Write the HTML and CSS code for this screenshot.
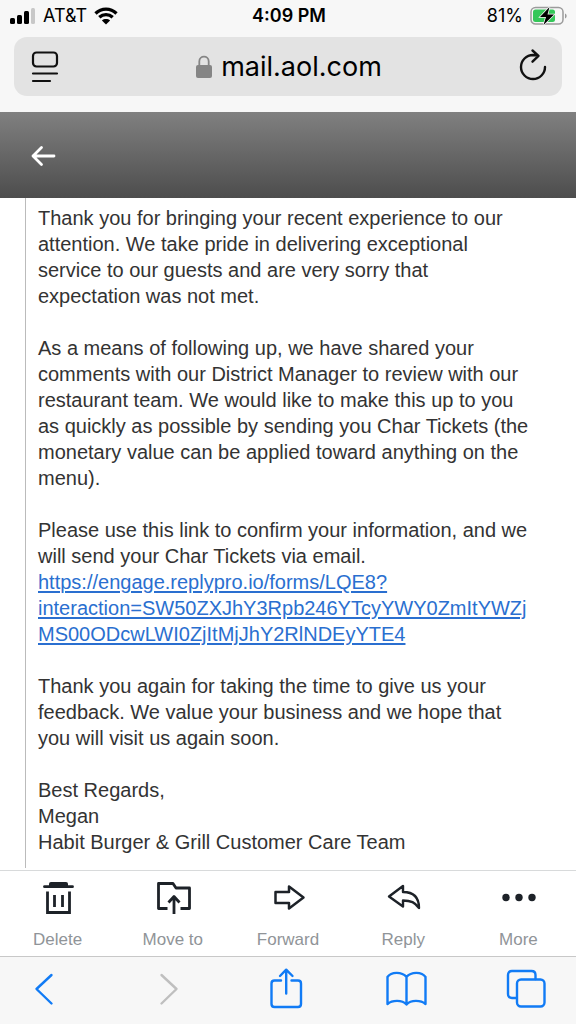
FILE: index.html
```html
<!DOCTYPE html>
<html lang="en">
<head>
<meta charset="utf-8">
<meta name="viewport" content="width=device-width, initial-scale=1">
<title>AOL Mail</title>
<link rel="stylesheet" href="styles.css">
</head>
<body>
<header class="browser-top">
  <div class="status">
    <div class="status-left">
      <svg class="signal" width="26" height="18" viewBox="0 0 26 18" aria-hidden="true">
        <rect x="0" y="11" width="5" height="6" rx="1.5"/><rect x="7" y="8" width="5" height="9" rx="1.5"/><rect x="14" y="4" width="5" height="13" rx="1.5"/><rect x="21" y="1" width="4" height="16" rx="1.5" fill="#c8c8c8"/>
      </svg>
      <span class="carrier">AT&amp;T</span>
      <svg class="wifi" width="24" height="18" viewBox="0 0 24 18" aria-hidden="true">
        <path d="M1.500 6.500C7.500 .7 16.500 .7 22.500 6.500M5.300 10.300C9.200 6.700 14.800 6.700 18.700 10.300" fill="none" stroke="#000" stroke-width="3.300"/>
        <path d="M12 17.500L7.900 13.400C10.200 11.500 13.800 11.500 16.100 13.400Z"/>
      </svg>
    </div>
    <time class="clock">4:09 PM</time>
    <div class="status-right">
      <span>81%</span>
      <svg width="38" height="20" viewBox="0 0 38 20" aria-hidden="true">
        <rect x="1" y="1.500" width="32" height="16.500" rx="4.500" fill="none" stroke="#9b9b9b" stroke-width="1.500"/>
        <rect x="3" y="3.500" width="22" height="12.500" rx="2.500" fill="#34c759"/>
        <path d="M35 7.500C37.200 8.200 37.200 11.800 35 12.500Z" fill="#9b9b9b"/>
        <path d="M19.500 1L10 11H16L13.500 19L24 8.500H17.500Z" stroke="#f7f7f7" stroke-width="1.500" paint-order="stroke"/>
      </svg>
    </div>
  </div>
  <div class="address">
    <button class="icon-button" aria-label="Page menu">
      <svg width="30" height="34" viewBox="0 0 30 34" fill="none" stroke="#111" stroke-width="2.200" stroke-linecap="round">
        <rect x="3" y="2.500" width="24" height="14" rx="3.500"/><path d="M3 23.500H27M3 31H20"/>
      </svg>
    </button>
    <div class="site">
      <svg width="16" height="24" viewBox="0 0 16 24" aria-hidden="true">
        <path d="M3.300 11V6.500C3.300 .1 12.700 .1 12.700 6.500V11" fill="none" stroke="#858585" stroke-width="1.800"/><rect x="0" y="10" width="16" height="13" rx="2" fill="#858585"/>
      </svg>
      <span>mail.aol.com</span>
    </div>
    <button class="icon-button" aria-label="Reload">
      <svg width="30" height="34" viewBox="0 0 30 34" fill="none" stroke="#111" stroke-width="2.400" stroke-linecap="round" stroke-linejoin="round">
        <path d="M27 17A12 12 0 1 1 15 5L20 5.500M14.500 0.500L20.500 5.900L14.500 11.700"/>
      </svg>
    </button>
  </div>
</header>

<div class="mail-header">
  <button class="icon-button" aria-label="Back to inbox">
    <svg width="28" height="24" viewBox="0 0 28 24" fill="none" stroke="#fff" stroke-width="2.800" stroke-linecap="round" stroke-linejoin="round"><path d="M25 12H4M12.500 3.500L4 12L12.500 20.500"/></svg>
  </button>
</div>

<main class="message">
  <blockquote class="quote">
    <p>Thank you for bringing your recent experience to our attention. We take pride in delivering exceptional service to our guests and are very sorry that expectation was not met.</p>
    <p>As a means of following up, we have shared your comments with our District Manager to review with our restaurant team. We would like to make this up to you as quickly as possible by sending you Char Tickets (the monetary value can be applied toward anything on the menu).</p>
    <p>Please use this link to confirm your information, and we will send your Char Tickets via email.<br>
    <a href="https://engage.replypro.io/forms/LQE8?interaction=SW50ZXJhY3Rpb246YTcyYWY0ZmItYWZjMS00ODcwLWI0ZjItMjJhY2RlNDEyYTE4">https://engage.replypro.io/forms/LQE8?<br>interaction=SW50ZXJhY3Rpb246YTcyYWY0ZmItYWZj<wbr>MS00ODcwLWI0ZjItMjJhY2RlNDEyYTE4</a></p>
    <p>Thank you again for taking the time to give us your feedback. We value your business and we hope that you will visit us again soon.</p>
    <p>Best Regards,<br>Megan<br>Habit Burger &amp; Grill Customer Care Team</p>
  </blockquote>
</main>

<div class="actions">
  <button class="action">
    <svg width="36" height="36" viewBox="0 0 36 36" fill="none" stroke="#1d2228" stroke-width="2.800">
      <path d="M4.500 6.700H32.500" stroke-linecap="round"/><path d="M9 6V4Q9 2 11 2H26Q28 2 28 4V6Z" fill="#1d2228" stroke="none"/><path d="M7.500 11.500V32.500H29.500V11.500M14.500 15V27M22.500 15V27"/>
    </svg>
    <span>Delete</span>
  </button>
  <button class="action">
    <svg width="36" height="36" viewBox="0 0 36 36" fill="none" stroke="#1d2228" stroke-width="2.800" stroke-linejoin="round">
      <path d="M12.500 28.500H3.500V3.500H18L21 8H34.500V28.500H25.500M19 34V17M13.500 22.500L19 16.500L24.500 22.500"/>
    </svg>
    <span>Move to</span>
  </button>
  <button class="action">
    <svg width="36" height="36" viewBox="0 0 36 36" fill="none" stroke="#1d2228" stroke-width="2.500" stroke-linejoin="round">
      <path d="M5.500 12H19V6.500L33.500 17.500L19 28.500V23H5.500Z"/>
    </svg>
    <span>Forward</span>
  </button>
  <button class="action">
    <svg width="36" height="36" viewBox="0 0 36 36" fill="none" stroke="#1d2228" stroke-width="2.400" stroke-linejoin="round">
      <path d="M4 16.500L18 6V12C28 12 34 17 34 28C30 22.500 26 20.500 18 20.500V26.500Z"/>
    </svg>
    <span>Reply</span>
  </button>
  <button class="action">
    <svg width="36" height="36" viewBox="0 0 36 36" fill="#1d2228"><circle cx="6" cy="17.500" r="3.700"/><circle cx="19" cy="17.500" r="3.700"/><circle cx="32" cy="17.500" r="3.700"/></svg>
    <span>More</span>
  </button>
</div>

<nav class="browser-bottom" aria-label="Browser">
  <button class="icon-button" aria-label="Back"><svg width="40" height="44" viewBox="0 0 40 44"><path d="M27.500 8L12.500 22L27.500 36.500"/></svg></button>
  <button class="icon-button" aria-label="Forward" disabled><svg class="muted" width="40" height="44" viewBox="0 0 40 44"><path d="M16.500 8L31.500 22L16.500 36.500"/></svg></button>
  <button class="icon-button" aria-label="Share"><svg width="40" height="44" viewBox="0 0 40 44"><path d="M16 13.500H9.500Q6.500 13.500 6.500 16.500V37Q6.500 40 9.500 40H33Q36 40 36 37V16.500Q36 13.500 33 13.500H26.500M21.200 26.500V3M15 9L21.200 2.700L27.500 9"/></svg></button>
  <button class="icon-button" aria-label="Bookmarks"><svg width="40" height="44" viewBox="0 0 40 44"><path d="M20.500 10C16 4.500 5 4.500 1.500 10V37C6 33 16 32.500 20.500 37.500C25 32.500 35 33 39.500 37V10C36 4.500 25 4.500 20.500 10ZM20.500 10V37"/></svg></button>
  <button class="icon-button" aria-label="Tabs"><svg width="40" height="44" viewBox="0 0 40 44"><path d="M10.500 31H6Q2 31 2 27V8Q2 4 6 4H25.500Q29.500 4 29.500 8V12"/><rect x="11" y="12.500" width="27.500" height="27" rx="4"/></svg></button>
</nav>
</body>
</html>
```
FILE: styles.css
```css
* {
  box-sizing: border-box;
}

body {
  margin: 0;
  min-height: 100vh;
  display: flex;
  flex-direction: column;
  background: #fff;
  color: #333;
  font-family: "Liberation Sans", Arial, sans-serif;
}

button {
  border: 0;
  padding: 0;
  background: none;
  font: inherit;
  color: inherit;
}

svg {
  display: block;
  overflow: visible;
}

.icon-button {
  display: flex;
}

.browser-top {
  padding: 5px 14px 16px;
  background: #f7f7f7;
  color: #000;
  font-family: Inter, sans-serif;
}

.status {
  display: grid;
  grid-template-columns: 1fr auto 1fr;
  align-items: center;
  margin: 0 -6px 10px -4px;
  font-size: 18px;
  line-height: 22px;
}

.status-left,
.status-right {
  display: flex;
  align-items: center;
  gap: 7px;
}

.status-right {
  justify-content: flex-end;
}

.clock {
  font-weight: 600;
}

.address {
  display: flex;
  align-items: center;
  justify-content: space-between;
  padding: 13px 14px 12px 16px;
  border-radius: 13px;
  background: #e3e3e3;
}

.site {
  display: flex;
  align-items: center;
  gap: 9px;
  font-size: 27px;
  line-height: 34px;
}

.mail-header {
  display: flex;
  align-items: center;
  padding: 32px 29px 30px;
  background: linear-gradient(#808080, #4d4d4d);
}

.message {
  flex: 1;
  display: flex;
  padding: 0 44px 2px 25px;
}

.quote {
  flex: 1;
  min-width: 0;
  margin: 0;
  padding: 7px 0 13px 12px;
  border-left: 1px solid #bbb;
  font-size: 20px;
  line-height: 26px;
}

.quote p {
  margin: 0 0 26px;
  overflow-wrap: anywhere;
}

.quote p:last-child {
  margin-bottom: 0;
}

.quote a {
  color: #2a6fd0;
  text-underline-offset: 2px;
}

.actions {
  display: grid;
  grid-template-columns: repeat(5, 1fr);
  padding: 9px 0 6px;
  border-top: 1px solid #d8dadb;
  background: #fff;
}

.action {
  display: flex;
  flex-direction: column;
  align-items: center;
  gap: 14px;
  color: #909498;
  font-size: 17px;
  line-height: 20px;
}

.browser-bottom {
  display: flex;
  justify-content: space-between;
  padding: 10px 30px 13px 24px;
  border-top: 1px solid #c8c8c8;
  background: #f7f7f7;
}

.browser-bottom svg {
  fill: none;
  stroke: #117bf5;
  stroke-width: 2.4;
  stroke-linecap: round;
  stroke-linejoin: round;
}

.browser-bottom .muted {
  stroke: #bfbfbf;
}
```
